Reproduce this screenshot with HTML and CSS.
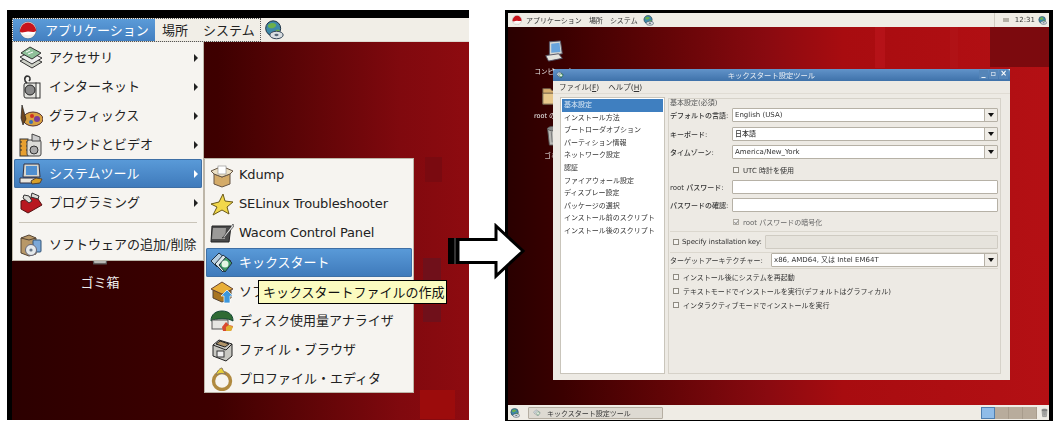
FILE: index.html
```html
<!DOCTYPE html>
<html lang="ja">
<head>
    <meta charset="utf-8">
    <title>キックスタート</title>
    <link rel="stylesheet" href="styles.css">
</head>
<body>
    <!-- shared icons -->
    <svg class="defs" width="0" height="0">
        <symbol id="i-hat" viewBox="0 0 24 24"><circle cx="12" cy="12" r="11" fill="#fff" stroke="#555" stroke-width=".6"/><path d="M1 14c1-7 5-12 11-12s10 5 11 11c-3 3-7 1-11 1s-8 3-11 0z" fill="#c8141c"/><path d="M3 17c5 2 13 2 18 0-2 4-5 6-9 6s-7-2-9-6z" fill="#f4f0ea"/></symbol>
        <symbol id="i-net" viewBox="0 0 24 24"><circle cx="11" cy="10" r="9" fill="#3d88a8" stroke="#234" stroke-width="1.2"/><path d="M5 6c3-3 7-3 9-1s-2 5-5 5-5-2-4-4zM14 12c2-1 4-1 5 0-1 3-3 4-5 4z" fill="#6cb04a"/><ellipse cx="15" cy="18" rx="8" ry="4.500" fill="#d8dde0" stroke="#345" stroke-width="1.2"/><ellipse cx="15" cy="18" rx="2.500" ry="1.400" fill="#567"/></symbol>
        <symbol id="i-acc" viewBox="0 0 24 24"><path d="M1 15l10-5 12 6-10 6z" fill="#cfd2c8" stroke="#333"/><path d="M1 11l10-5 12 6-10 6z" fill="#eee" stroke="#333"/><path d="M2 7l9-6 11 6-9 6z" fill="#8fc09a" stroke="#333"/><path d="M7 6l4-2M9 8l5-2" stroke="#fff"/></symbol>
        <symbol id="i-www" viewBox="0 0 24 24"><rect x="5" y="8" width="14" height="15" rx="2" fill="#e2e2dd" stroke="#333"/><circle cx="11" cy="15" r="5" fill="#888" stroke="#222"/><path d="M8 8c-3-2-3-6 0-7 3 0 4 3 2 5" fill="none" stroke="#333" stroke-width="1.6"/><rect x="17" y="8" width="4" height="15" fill="#f5f5f0" stroke="#333"/></symbol>
        <symbol id="i-gfx" viewBox="0 0 24 24"><ellipse cx="14" cy="15" rx="10" ry="7" fill="#d8a040" stroke="#533"/><circle cx="18" cy="15" r="3" fill="#7a3c98"/><circle cx="13" cy="12" r="2" fill="#d03020"/><circle cx="12" cy="18" r="2" fill="#3a70b8"/><path d="M3 1l4 14-3 6-2-7z" fill="#6b4420" stroke="#222" stroke-width=".7"/></symbol>
        <symbol id="i-media" viewBox="0 0 24 24"><rect x="1" y="6" width="8" height="17" fill="#e8a030" stroke="#333"/><path d="M1 9h2M1 13h2M1 17h2M7 9h2M7 13h2M7 17h2" stroke="#333"/><rect x="8" y="7" width="14" height="16" rx="2" fill="#dcdcd8" stroke="#444"/><circle cx="15" cy="17" r="4" fill="#aaa" stroke="#333"/><path d="M13 1l8 3v4h-8z" fill="#ccc" stroke="#444"/></symbol>
        <symbol id="i-sys" viewBox="0 0 24 24"><path d="M5 2h15l1 13H4z" fill="#d6d6d0" stroke="#334"/><rect x="7" y="4" width="11" height="9" fill="#4f8fd0"/><path d="M1 16h17l2 5H1z" fill="#e8e6de" stroke="#334"/><path d="M12 19l5-3 6 1-2 4-8 1z" fill="#d8a028" stroke="#543"/></symbol>
        <symbol id="i-prog" viewBox="0 0 24 24"><path d="M2 10l15-5 6 9-14 8-7-4z" fill="#b81820" stroke="#511"/><path d="M5 4l5 1 3 5-3 2-6-5zM13 2l7 3-1 3-7-2z" fill="#dcdcd8" stroke="#333"/></symbol>
        <symbol id="i-add" viewBox="0 0 24 24"><path d="M2 5l8-3 7 3v16l-7 2-8-3z" fill="#b89868" stroke="#543"/><path d="M2 5l8 2 7-2" fill="none" stroke="#543"/><rect x="14" y="7" width="8" height="12" rx="1" fill="#7ba8d8" stroke="#357"/><circle cx="12" cy="17" r="5.500" fill="#e6eaec" stroke="#667"/><circle cx="12" cy="17" r="1.600" fill="#678"/></symbol>
        <symbol id="i-kdump" viewBox="0 0 24 24"><path d="M4 10l8 3 8-3v10l-8 3-8-3z" fill="#d4ab68" stroke="#654"/><path d="M4 10l-3-3 7-3 4 3 4-3 7 3-3 3-8 3z" fill="#ece0c4" stroke="#654"/><rect x="8" y="2" width="8" height="8" fill="#fff" stroke="#888" stroke-width=".6"/></symbol>
        <symbol id="i-star" viewBox="0 0 24 24"><path d="M13 1l2 7 8 1-6 5 2 7-7-4-9 5 4-8-6-3 8-2z" fill="#f2d84a" stroke="#6b5a18"/></symbol>
        <symbol id="i-wacom" viewBox="0 0 24 24"><path d="M2 4h19l-2 16H1z" fill="#4a4a4a" stroke="#222"/><path d="M3 6h13l-1 11H2z" fill="#9b9a98"/><path d="M23 2l-9 12-2 2 3-1 9-11z" fill="#ddd" stroke="#222" stroke-width=".6"/></symbol>
        <symbol id="i-kick" viewBox="0 0 24 24"><path d="M1 10l8-8 6 5-8 9z" fill="#b8cfe0" stroke="#234"/><path d="M5 13l8-9 8 6-8 11z" fill="#dfe8e8" stroke="#234"/><path d="M9 14l7-8 6 6-7 9z" fill="#3f9a66" stroke="#234"/><circle cx="15" cy="13" r="3.500" fill="#e4f4e4"/></symbol>
        <symbol id="i-up" viewBox="0 0 24 24"><path d="M3 10l9 4 9-4v8l-9 4-9-4z" fill="#a87420" stroke="#543"/><path d="M1 9l11-7 11 7-11 5z" fill="#e8ae38" stroke="#643"/><path d="M17 10l6 6h-3v7h-6v-7h-3z" fill="#3e98dc" stroke="#fff" stroke-width=".7"/></symbol>
        <symbol id="i-disk" viewBox="0 0 24 24"><path d="M1 12c0-7 5-10 11-10s11 3 11 10c-4-3-18-3-22 0z" fill="#2f6b34" stroke="#143"/><rect x="2" y="11" width="16" height="9" fill="#e6e6e2" stroke="#555"/><path d="M12 18l4-5 3 3 4 1-2 5h-8z" fill="#d84a30"/><path d="M16 18l3-2 4 2-2 4h-5z" fill="#e0b030"/></symbol>
        <symbol id="i-files" viewBox="0 0 24 24"><path d="M3 7l6-5 13 4v12l-6 5-13-5z" fill="#c8c8c2" stroke="#222"/><path d="M3 7l13 5 6-6" fill="none" stroke="#222"/><path d="M6 6l4-3 9 3-4 3z" fill="#b09468" stroke="#222"/><rect x="7" y="13" width="7" height="6" fill="#eee" stroke="#333"/></symbol>
        <symbol id="i-prof" viewBox="0 0 24 24"><circle cx="12" cy="14" r="8.500" fill="none" stroke="#b08a40" stroke-width="3.400"/><path d="M6 8c1-4 4-7 6-7 1 3 3 5 4 6-3-1-7-1-10 1z" fill="#e8d038" stroke="#876"/></symbol>
        <symbol id="i-pc" viewBox="0 0 24 24"><path d="M7 2l12-1 2 14-14 2z" fill="#d8d8d2" stroke="#556"/><path d="M9 4l9-1 1 10-10 1z" fill="#68a4dc"/><path d="M3 17l14-2 4 5-15 3z" fill="#e4e4de" stroke="#556"/></symbol>
        <symbol id="i-folder" viewBox="0 0 24 24"><path d="M2 5h8l2 2h10v15H2z" fill="#d8b070" stroke="#654"/><path d="M2 10h20v12H2z" fill="#e8c88c" stroke="#654"/></symbol>
        <symbol id="i-trash" viewBox="0 0 24 24"><path d="M5 5h14l-2 18H7z" fill="#b8b8b4" stroke="#555"/><ellipse cx="12" cy="5" rx="7" ry="2.500" fill="#888" stroke="#555"/><path d="M9 8l1 12M12 8v12M15 8l-1 12" stroke="#777"/></symbol>
    </svg>

    <!-- left screenshot: the menu -->
    <div class="shot shot-left">
        <div class="panel">
            <div class="panel-menus">
                <span class="panel-item active"><svg class="ic-hat"><use href="#i-hat"/></svg>アプリケーション</span>
                <span class="panel-item">場所</span>
                <span class="panel-item">システム</span>
            </div>
            <svg class="ic-net"><use href="#i-net"/></svg>
        </div>

        <div class="desk-icon trash-big">
            <svg class="ic"><use href="#i-trash"/></svg>
            <span>ゴミ箱</span>
        </div>

        <div class="menu main-menu">
            <div class="menu-item"><svg class="ic"><use href="#i-acc"/></svg><span>アクセサリ</span><i class="caret"></i></div>
            <div class="menu-item"><svg class="ic"><use href="#i-www"/></svg><span>インターネット</span><i class="caret"></i></div>
            <div class="menu-item"><svg class="ic"><use href="#i-gfx"/></svg><span>グラフィックス</span><i class="caret"></i></div>
            <div class="menu-item"><svg class="ic"><use href="#i-media"/></svg><span>サウンドとビデオ</span><i class="caret"></i></div>
            <div class="menu-item selected"><svg class="ic"><use href="#i-sys"/></svg><span>システムツール</span><i class="caret"></i></div>
            <div class="menu-item"><svg class="ic"><use href="#i-prog"/></svg><span>プログラミング</span><i class="caret"></i></div>
            <div class="menu-sep"></div>
            <div class="menu-item"><svg class="ic"><use href="#i-add"/></svg><span>ソフトウェアの追加/削除</span></div>
        </div>

        <div class="menu sub-menu">
            <div class="menu-item"><svg class="ic"><use href="#i-kdump"/></svg><span class="latin">Kdump</span></div>
            <div class="menu-item"><svg class="ic"><use href="#i-star"/></svg><span class="latin">SELinux Troubleshooter</span></div>
            <div class="menu-item"><svg class="ic"><use href="#i-wacom"/></svg><span class="latin">Wacom Control Panel</span></div>
            <div class="menu-item selected"><svg class="ic"><use href="#i-kick"/></svg><span>キックスタート</span></div>
            <div class="menu-item"><svg class="ic"><use href="#i-up"/></svg><span>ソフ</span></div>
            <div class="menu-item"><svg class="ic"><use href="#i-disk"/></svg><span>ディスク使用量アナライザ</span></div>
            <div class="menu-item"><svg class="ic"><use href="#i-files"/></svg><span>ファイル・ブラウザ</span></div>
            <div class="menu-item"><svg class="ic"><use href="#i-prof"/></svg><span>プロファイル・エディタ</span></div>
        </div>

        <div class="tooltip">キックスタートファイルの作成</div>
    </div>

    <!-- right screenshot: the kickstart tool -->
    <div class="shot shot-right">
        <div class="mini-panel">
            <svg class="mini-hat"><use href="#i-hat"/></svg>
            <span>アプリケーション</span>
            <span>場所</span>
            <span>システム</span>
            <svg class="mini-net"><use href="#i-net"/></svg>
            <div class="tray">
                <i class="tray-dot"></i>
                <span>12:31</span>
                <svg class="mini-tray"><use href="#i-net"/></svg>
            </div>
        </div>

        <div class="mini-desk">
            <div class="mini-icon mi-pc"><svg><use href="#i-pc"/></svg><span>コンピュータ</span></div>
            <div class="mini-icon mi-root"><svg><use href="#i-folder"/></svg><span>root の</span></div>
            <div class="mini-icon mi-trash"><svg><use href="#i-trash"/></svg><span>ゴミ箱</span></div>

            <div class="window">
                <div class="titlebar">
                    <svg class="title-ic"><use href="#i-kick"/></svg>
                    <span class="title-text">キックスタート設定ツール</span>
                    <div class="title-btns"><b>_</b><b>▫</b><b>×</b></div>
                </div>
                <div class="menubar">
                    <span>ファイル(<u>F</u>)</span>
                    <span>ヘルプ(<u>H</u>)</span>
                </div>
                <div class="win-body">
                    <ul class="side-list">
                        <li class="current">基本設定</li>
                        <li>インストール方法</li>
                        <li>ブートローダオプション</li>
                        <li>パーティション情報</li>
                        <li>ネットワーク設定</li>
                        <li>認証</li>
                        <li>ファイアウォール設定</li>
                        <li>ディスプレー設定</li>
                        <li>パッケージの選択</li>
                        <li>インストール前のスクリプト</li>
                        <li>インストール後のスクリプト</li>
                    </ul>
                    <div class="settings">
                        <div class="frame-title">基本設定(必須)</div>
                        <div class="form-row">
                            <label>デフォルトの言語:</label>
                            <div class="field combo">English (USA)<i></i></div>
                        </div>
                        <div class="form-row">
                            <label>キーボード:</label>
                            <div class="field combo">日本語<i></i></div>
                        </div>
                        <div class="form-row">
                            <label>タイムゾーン:</label>
                            <div class="field combo">America/New_York<i></i></div>
                        </div>
                        <div class="check-row indent"><i class="box"></i>UTC 時計を使用</div>
                        <div class="form-row">
                            <label>root パスワード:</label>
                            <div class="field"></div>
                        </div>
                        <div class="form-row">
                            <label>パスワードの確認:</label>
                            <div class="field"></div>
                        </div>
                        <div class="check-row indent muted"><i class="box ticked"></i>root パスワードの暗号化</div>
                        <div class="rule"></div>
                        <div class="key-row">
                            <i class="box"></i><span>Specify installation key:</span>
                            <div class="field disabled"></div>
                        </div>
                        <div class="rule"></div>
                        <div class="arch-row">
                            <label>ターゲットアーキテクチャー:</label>
                            <div class="field combo">x86, AMD64, 又は Intel EM64T<i></i></div>
                        </div>
                        <div class="rule rule-gap"></div>
                        <div class="check-row"><i class="box"></i>インストール後にシステムを再起動</div>
                        <div class="check-row"><i class="box"></i>テキストモードでインストールを実行(デフォルトはグラフィカル)</div>
                        <div class="check-row"><i class="box"></i>インタラクティブモードでインストールを実行</div>
                    </div>
                </div>
            </div>
        </div>

        <div class="taskbar">
            <svg class="show-desk"><use href="#i-net"/></svg>
            <div class="task-btn"><svg><use href="#i-kick"/></svg>キックスタート設定ツール</div>
            <div class="pager"><i class="on"></i><i></i><i></i><i></i></div>
            <svg class="task-trash"><use href="#i-trash"/></svg>
        </div>
    </div>

    <!-- arrow between the two -->
    <svg class="arrow" width="80" height="58" viewBox="0 0 80 58">
        <rect x="1" y="15" width="12" height="26" fill="#000"/>
        <path d="M8 15v26" stroke="#666" stroke-width="1"/>
        <path d="M11 16.500H49V3L76 28 49 53V39.500H11z" fill="#fff" stroke="#000" stroke-width="3"/>
    </svg>
</body>
</html>
```

FILE: styles.css
```css
* {
    box-sizing: border-box;
}

html, body {
    margin: 0;
    height: 428px;
    overflow: hidden;
    background: #fff;
}

body {
    position: relative;
    font-family: "DejaVu Sans", "Noto Sans CJK JP", sans-serif;
    color: #222;
}

.defs {
    position: absolute;
}

svg {
    display: block;
    flex: none;
}

.shot {
    position: absolute;
    overflow: hidden;
    border-style: solid;
    border-color: #000;
}

/* left shot */

.shot-left {
    left: 7px;
    top: 10px;
    width: 462px;
    height: 410px;
    border-width: 8px 0 0 5px;
    background:
        linear-gradient(#7a0a10, #7a0a10) 413px 139px / 17px 25px no-repeat,
        linear-gradient(#70101a, #70101a) 411px 240px / 18px 27px no-repeat,
        linear-gradient(#70101a, #70101a) 411px 287px / 18px 17px no-repeat,
        linear-gradient(#9c0c0c, #9c0c0c) 408px 372px / 35px 29px no-repeat,
        linear-gradient(90deg, #2c0000, #3e0000 45%, #80090e 85%, #8e0b10);
}

.panel {
    display: flex;
    align-items: center;
    height: 24px;
    background: #f1eee7;
    border-bottom: 1px solid #ddd9d0;
    font-size: 13px;
}

.panel-menus {
    display: flex;
    height: 24px;
    border: 1px dotted #555;
}

.panel-item {
    display: flex;
    align-items: center;
    white-space: nowrap;
    padding: 0 8px 0 7px;
}

.panel-item:last-child {
    padding-right: 5px;
}

.panel-item.active {
    gap: 8px;
    width: 142px;
    padding: 0 0 0 6px;
    color: #fff;
    background: linear-gradient(#5b9bd8, #437fc0);
}

.ic-hat {
    width: 18px;
    height: 18px;
}

.ic-net {
    width: 20px;
    height: 20px;
    margin-left: 3px;
}

.menu {
    position: absolute;
    background: #f6f4f0;
    border: 1px solid #bdb6a9;
    font-size: 13px;
}

.main-menu {
    left: 0;
    top: 24px;
    width: 192px;
    height: 219px;
    padding: 1px 1px 0;
    border-top: 0;
}

.sub-menu {
    left: 192px;
    top: 140px;
    width: 210px;
    height: 235px;
    padding: 2px 1px 0;
}

.menu-item {
    display: flex;
    align-items: center;
    height: 29px;
    padding-left: 5px;
    gap: 6px;
    white-space: nowrap;
    position: relative;
}

.menu-item span {
    margin-top: -2px;
}

.sub-menu .menu-item {
    padding-left: 4px;
    gap: 5px;
}

.latin {
    letter-spacing: -.15px;
}

.menu-item.selected {
    color: #fff;
    background: linear-gradient(#5a9bd9, #3e79ba);
    border-radius: 2px;
    box-shadow: inset 0 0 0 1px #3e6fa5;
}

.ic {
    width: 24px;
    height: 24px;
}

.caret {
    position: absolute;
    left: 180px;
    top: 11px;
    border-left: 4px solid #222;
    border-top: 4px solid transparent;
    border-bottom: 4px solid transparent;
}

.selected .caret {
    border-left-color: #fff;
}

.menu-sep {
    height: 1px;
    margin: 5px 5px 7px;
    background: #c9c4b9;
}

.desk-icon {
    position: absolute;
    left: 68px;
    top: 217px;
    width: 40px;
    color: #eee;
    font-size: 13px;
    text-align: center;
}

.desk-icon .ic {
    margin: 0 auto 7px;
    width: 30px;
    height: 30px;
}

.tooltip {
    position: absolute;
    left: 246px;
    top: 262px;
    width: 189px;
    height: 24px;
    padding: 2px 0 0 4px;
    background: #fbfbc0;
    border: 1px solid #000;
    color: #111;
    font-size: 13px;
    line-height: 19px;
    white-space: nowrap;
}

.arrow {
    position: absolute;
    left: 447px;
    top: 223px;
}

/* right shot */

.shot-right {
    left: 505px;
    top: 10px;
    width: 548px;
    height: 411px;
    border-width: 3px 4px 1px 3px;
    display: flex;
    flex-direction: column;
    font-size: 7px;
    color: #333;
    filter: blur(.3px);
}

.mini-panel {
    display: flex;
    align-items: center;
    height: 14px;
    padding-left: 4px;
    gap: 7px;
    background: #efece5;
    font-size: 7px;
}

.mini-hat {
    width: 10px;
    height: 10px;
    margin-right: -3px;
}

.mini-net {
    width: 11px;
    height: 11px;
    margin-left: -2px;
}

.tray {
    display: flex;
    align-items: center;
    gap: 3px;
    margin-left: auto;
    height: 14px;
    padding: 0 2px 0 8px;
    border-left: 1px solid #d0ccc2;
    font-size: 7px;
}

.tray-dot {
    width: 6px;
    height: 4px;
    margin-right: 3px;
    background: #b4b0a6;
}

.mini-tray {
    width: 9px;
    height: 9px;
}

.mini-desk {
    position: relative;
    flex: 1;
    background:
        linear-gradient(#b51218, #b51218) 367px 0 / 10px 41px no-repeat,
        linear-gradient(#b01216, #b01216) 442px 0 / 8px 41px no-repeat,
        linear-gradient(#7c0a0e, #7c0a0e) 482px 0 / 59px 40px no-repeat,
        linear-gradient(90deg, #2a0000, #3a0000 10%, #600406 28%, #8a0a10 48%, #a80c10 62%, #b41014 100%);
}

.mini-icon {
    position: absolute;
    width: 50px;
    color: #eee;
    font-size: 6.500px;
    text-align: center;
    white-space: nowrap;
}

.mini-icon svg {
    width: 22px;
    height: 22px;
    margin: 0 auto 4px;
}

.mi-pc {
    left: 21px;
    top: 13px;
}

.mi-root {
    left: 19px;
    top: 57px;
    padding-left: 7px;
    text-align: left;
}

.mi-root svg {
    margin-left: 7px;
}

.mi-trash {
    left: 21px;
    top: 97px;
}

.window {
    position: absolute;
    left: 45px;
    top: 42px;
    width: 457px;
    height: 311px;
    display: flex;
    flex-direction: column;
    background: #edeae4;
}

.titlebar {
    position: relative;
    display: flex;
    align-items: center;
    justify-content: center;
    height: 12px;
    padding-right: 20px;
    color: #e8eef4;
    font-size: 7.300px;
    background: linear-gradient(#6193c9, #3f72aa);
    border-radius: 3px 3px 0 0;
}

.title-ic {
    position: absolute;
    left: 3px;
    top: 2px;
    width: 8px;
    height: 8px;
}

.title-btns {
    position: absolute;
    right: 2px;
    top: 1px;
    display: flex;
    gap: 1px;
}

.title-btns b {
    width: 9px;
    height: 9px;
    font-size: 8px;
    line-height: 8px;
    color: #fff;
    text-align: center;
    background: #5585b8;
}

.menubar {
    display: flex;
    gap: 9px;
    height: 13px;
    padding: 2px 6px;
    font-size: 7.500px;
    line-height: 9px;
    border-bottom: 1px solid #e0dcd4;
}

.win-body {
    display: flex;
    flex: 1;
    gap: 3px;
    padding: 3px 9px 6px 7px;
}

.side-list {
    list-style: none;
    width: 105px;
    margin: 0;
    padding: 1px;
    background: #fff;
    border: 1px solid #c9c5bb;
}

.side-list li {
    height: 12.600px;
    padding-left: 2px;
    line-height: 12px;
    white-space: nowrap;
}

.side-list .current {
    color: #dce8f4;
    background: #3f7fc0;
}

.settings {
    flex: 1;
    padding: 0 2px 0 1px;
    margin-top: 1px;
    border: 1px solid #d6d2c9;
}

.frame-title {
    height: 9px;
    line-height: 8px;
    color: #555;
}

.form-row {
    display: grid;
    grid-template-columns: 62px 1fr;
    align-items: center;
    height: 14px;
    margin-bottom: 4.500px;
    font-weight: 500;
    white-space: nowrap;
}

.field {
    position: relative;
    height: 14px;
    padding-left: 2px;
    line-height: 13px;
    background: #fff;
    border: 1px solid #b6b1a6;
    border-radius: 1px;
    white-space: nowrap;
}

.field.disabled {
    flex: 1;
    background: #e6e3dc;
    border-color: #cfcbc2;
}

.combo i {
    position: absolute;
    right: 0;
    top: 0;
    bottom: 0;
    width: 13px;
    background: #efece6;
    border-left: 1px solid #b6b1a6;
}

.combo i::after {
    content: "";
    position: absolute;
    left: 3px;
    top: 4px;
    border-top: 4px solid #111;
    border-left: 3px solid transparent;
    border-right: 3px solid transparent;
}

.check-row {
    display: flex;
    align-items: center;
    gap: 4px;
    height: 14px;
    padding-left: 3px;
    white-space: nowrap;
}

.check-row.indent {
    padding-left: 63px;
    margin-bottom: 3px;
    margin-top: -1px;
}

.check-row.muted {
    margin-top: -2px;
    margin-bottom: 2px;
    color: #666;
}

.box {
    position: relative;
    width: 6px;
    height: 6px;
    flex: none;
    background: #f6f4f0;
    border: 1px solid #8f8b82;
}

.box.ticked {
    border-color: #b0aca3;
}

.box.ticked::after {
    content: "";
    position: absolute;
    left: 1px;
    top: -1px;
    width: 2px;
    height: 4px;
    border: solid #999;
    border-width: 0 1px 1px 0;
    transform: rotate(40deg);
}

.rule {
    height: 1px;
    background: #dbd7ce;
}

.rule-gap {
    margin-bottom: 1px;
}

.key-row {
    display: flex;
    align-items: center;
    gap: 3px;
    height: 20px;
    padding-left: 3px;
    letter-spacing: -.12px;
    white-space: nowrap;
}

.arch-row {
    display: grid;
    grid-template-columns: 101px 1fr;
    align-items: center;
    height: 15px;
    white-space: nowrap;
}

.taskbar {
    display: flex;
    align-items: center;
    height: 15px;
    padding-left: 2px;
    background: #efece5;
}

.show-desk {
    width: 10px;
    height: 10px;
    margin-right: 8px;
}

.task-btn {
    display: flex;
    align-items: center;
    gap: 6px;
    width: 135px;
    height: 12px;
    padding-left: 4px;
    background: #dedad2;
    border: 1px solid #b5aea2;
    border-radius: 1px;
    white-space: nowrap;
}

.task-btn svg {
    width: 8px;
    height: 8px;
    opacity: .5;
}

.pager {
    display: flex;
    margin-left: auto;
    height: 12px;
}

.pager i {
    width: 14px;
    background: #b8ac9c;
    border-right: 1px solid #a89c8c;
}

.pager .on {
    background: #8fbce8;
    border: 1px solid #4f7fb0;
}

.task-trash {
    width: 9px;
    height: 11px;
    margin-left: 3px;
}
```
